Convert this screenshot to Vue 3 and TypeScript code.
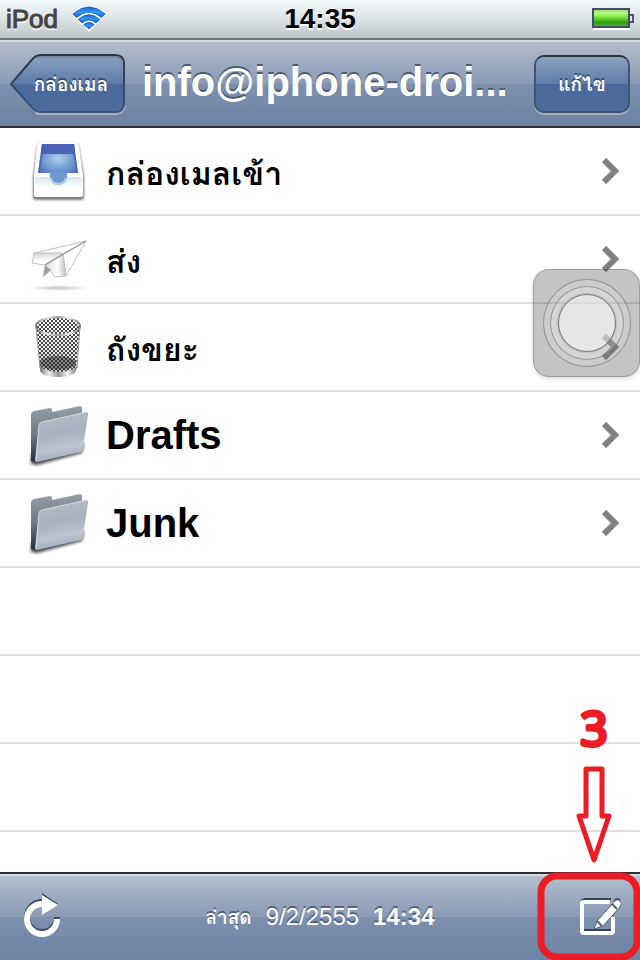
<script setup lang="ts">
interface Mailbox {
  name: string
  icon: 'inbox' | 'sent' | 'trash' | 'folder'
  latin: boolean
}

const mailboxes: Mailbox[] = [
  { name: 'กล่องเมลเข้า', icon: 'inbox', latin: false },
  { name: 'ส่ง', icon: 'sent', latin: false },
  { name: 'ถังขยะ', icon: 'trash', latin: false },
  { name: 'Drafts', icon: 'folder', latin: true },
  { name: 'Junk', icon: 'folder', latin: true },
]
const emptyRows = 3
</script>

<template>
  <div class="screen">
    <div class="status">
      <div class="carrier">
        <span>iPod</span>
        <svg class="wifi" width="34" height="26" viewBox="0 0 34 26" aria-hidden="true">
          <defs>
            <linearGradient id="wifiFill" x1="0" y1="0" x2="0" y2="1">
              <stop offset="0" stop-color="#1d62d8" />
              <stop offset="0.5" stop-color="#2d9cf5" />
              <stop offset="1" stop-color="#1455cf" />
            </linearGradient>
          </defs>
          <g fill="#fff" transform="translate(0 2)">
            <path d="M1 8Q17-6 33 8L29.500 11.500Q17 1 4.500 11.500Z" />
            <path d="M6.500 13.500Q17 4 27.500 13.500L24 17Q17 11 10 17Z" />
            <path d="M12 19Q17 15 22 19L17 24Z" />
          </g>
          <g fill="url(#wifiFill)" stroke="#1550c4" stroke-width="0.8">
            <path d="M1 8Q17-6 33 8L29.500 11.500Q17 1 4.500 11.500Z" />
            <path d="M6.500 13.500Q17 4 27.500 13.500L24 17Q17 11 10 17Z" />
            <path d="M12 18.500Q17 14.500 22 18.500L17 23Z" />
          </g>
        </svg>
      </div>
      <span class="clock">14:35</span>
      <svg class="battery" width="42" height="22" viewBox="0 0 42 22" aria-hidden="true">
        <defs>
          <linearGradient id="charge" x1="0" y1="0" x2="0" y2="1">
            <stop offset="0" stop-color="#8fd96a" />
            <stop offset="0.25" stop-color="#b4fa7e" />
            <stop offset="0.5" stop-color="#6fdc38" />
            <stop offset="0.75" stop-color="#2b9a0c" />
            <stop offset="1" stop-color="#5bc02c" />
          </linearGradient>
        </defs>
        <path d="M1 21H38" stroke="#fff" stroke-width="2" />
        <rect x="1" y="1" width="36" height="18" fill="url(#charge)" stroke="#454b66" stroke-width="2" />
        <path d="M38 7H41V14H38" fill="#e4e8ec" stroke="#50566c" stroke-width="2" />
      </svg>
    </div>

    <header class="nav">
      <button class="back" type="button">
        <svg class="back-shape" width="116" height="61" viewBox="0 0 118 61" preserveAspectRatio="none" aria-hidden="true">
          <defs>
            <linearGradient id="backFill" x1="0" y1="0" x2="0" y2="1">
              <stop offset="0" stop-color="#8ca2c0" />
              <stop offset="0.5" stop-color="#5c7ca9" />
              <stop offset="0.52" stop-color="#486a9b" />
              <stop offset="1" stop-color="#4c6d9c" />
            </linearGradient>
            <linearGradient id="backEdge" x1="0" y1="0" x2="0" y2="1">
              <stop offset="0" stop-color="#2c3442" />
              <stop offset="1" stop-color="#3c547c" />
            </linearGradient>
          </defs>
          <path d="M26 59Q29 60 33 60H107Q115 60 117 52" fill="none" stroke="#a5b3c8" stroke-width="2" />
          <path d="M1 30L22 6Q26 1 32 1H107Q116 1 116 10V49Q116 58 107 58H32Q26 58 22 53Z" fill="url(#backFill)" stroke="url(#backEdge)" stroke-width="2" />
          <path d="M27 4Q29 3 32 3H107Q112 3 114 6" fill="none" stroke="#64748e" stroke-width="2" opacity=".6" />
        </svg>
        <span class="back-label">กล่องเมล</span>
      </button>
      <h1 class="title">info@iphone-droi...</h1>
      <button class="edit" type="button">แก้ไข</button>
    </header>

    <main class="list">
      <ul class="rows">
        <li v-for="box in mailboxes" :key="box.name" class="row">
          <a class="row-link" href="#">
            <svg v-if="box.icon === 'inbox'" class="icon" width="64" height="64" viewBox="0 0 64 64" aria-hidden="true">
              <defs>
                <radialGradient id="trayFloor" cx="0.5" cy="0.5" r="0.6">
                  <stop offset="0" stop-color="#acd0e8" />
                  <stop offset="1" stop-color="#527bc5" />
                </radialGradient>
                <linearGradient id="trayFront" x1="0" y1="0" x2="0" y2="1">
                  <stop offset="0" stop-color="#d8e9f0" />
                  <stop offset="0.8" stop-color="#fff" />
                </linearGradient>
                <filter id="traySoft" x="-10%" y="-10%" width="120%" height="120%">
                  <feGaussianBlur stdDeviation="1" />
                </filter>
              </defs>
              <path d="M14 4H49Q52 4 53 8L58 38V58Q58 61 55 61H10Q7 61 7 58V38L11 8Q12 4 14 4Z" fill="#444" opacity=".7" filter="url(#traySoft)" />
              <path d="M14 3H49Q52 3 53 7L57 37V56Q57 58 54 58H10Q8 58 8 56V37L11 7Q12 3 14 3Z" fill="#fff" />
              <path d="M16 5H48L52 34H12Z" fill="url(#trayFloor)" />
              <path d="M16 5H48L49 15H15Z" fill="#4b62b5" />
              <path d="M16 5L12 34H14L17 15V5ZM47 5V15L50 34H52L48 5Z" fill="#405fb4" opacity=".7" />
              <path d="M9 38H24Q25 46 32 46Q40 46 41 38H56V52H9Z" fill="url(#trayFront)" />
              <path d="M24 33H41V38Q40 46 32 46Q25 46 24 38Z" fill="#6f98cf" />
              <path d="M25 39Q26 45 32 45Q39 45 40 39" fill="none" stroke="#b4d1e3" stroke-width="2" />
            </svg>

            <svg v-else-if="box.icon === 'sent'" class="icon" width="64" height="64" viewBox="0 0 64 64" aria-hidden="true">
              <defs>
                <linearGradient id="wing" x1="0" y1="0" x2="0.2" y2="1">
                  <stop offset="0" stop-color="#d0d0d0" />
                  <stop offset="0.7" stop-color="#fff" />
                </linearGradient>
                <linearGradient id="keel" x1="0" y1="0" x2="1" y2="0">
                  <stop offset="0" stop-color="#ddd" />
                  <stop offset="0.6" stop-color="#fff" />
                  <stop offset="1" stop-color="#bbb" />
                </linearGradient>
                <radialGradient id="planeShadow">
                  <stop offset="0" stop-color="#999" stop-opacity=".6" />
                  <stop offset="1" stop-color="#999" stop-opacity="0" />
                </radialGradient>
              </defs>
              <ellipse cx="32" cy="61" rx="30" ry="3" fill="url(#planeShadow)" />
              <g stroke="#c4c4c4" stroke-linejoin="round">
                <path d="M8 26L60 14L37 27Z" fill="#fff" />
                <path d="M8 26H37L18 38L6 36Z" fill="url(#wing)" />
                <path d="M60 14L37 27L40 49Z" fill="#fff" />
                <path d="M37 27L40 49L29 50L20 38Z" fill="url(#keel)" />
                <path d="M19 38L25 43L17 50Z" fill="#a0a0a0" />
              </g>
              <path d="M60 14L19 38" stroke="#888" />
            </svg>

            <svg v-else-if="box.icon === 'trash'" class="icon" width="64" height="64" viewBox="0 0 64 64" aria-hidden="true">
              <defs>
                <pattern id="mesh" width="4" height="4" patternUnits="userSpaceOnUse">
                  <path d="M0 0L4 4M4 0L0 4" stroke="#333" stroke-width="0.9" />
                </pattern>
                <linearGradient id="metal" x1="0" y1="0" x2="1" y2="0">
                  <stop offset="0" stop-color="#777" />
                  <stop offset="0.25" stop-color="#eee" />
                  <stop offset="0.5" stop-color="#96969c" />
                  <stop offset="0.75" stop-color="#f4f4f4" />
                  <stop offset="1" stop-color="#777" />
                </linearGradient>
                <linearGradient id="depth" x1="0" y1="0" x2="0" y2="1">
                  <stop offset="0" stop-color="#aaa" stop-opacity="0" />
                  <stop offset="1" stop-color="#555" stop-opacity=".3" />
                </linearGradient>
              </defs>
              <path d="M10 11Q10 2 32 2Q54 2 54 11L50 54Q47 60 32 60Q17 60 14 54Z" fill="url(#depth)" />
              <path d="M10 11Q10 2 32 2Q54 2 54 11L50 54Q47 60 32 60Q17 60 14 54Z" fill="url(#mesh)" />
              <ellipse cx="32" cy="48" rx="18" ry="7" fill="#222" opacity=".45" />
              <ellipse cx="32" cy="48" rx="18" ry="7" fill="url(#mesh)" />
              <path d="M14 51Q20 57 32 57Q45 57 51 51L50 56Q47 62 32 62Q17 62 14 56Z" fill="url(#metal)" />
              <ellipse cx="32" cy="11" rx="22" ry="9" fill="none" stroke="url(#metal)" stroke-width="2" />
              <path d="M10 12L14 53M54 12L51 53" stroke="#999" />
            </svg>

            <svg v-else class="icon" width="64" height="64" viewBox="0 0 64 64" aria-hidden="true">
              <defs>
                <linearGradient id="folderBack" x1="0" y1="0" x2="0" y2="1">
                  <stop offset="0" stop-color="#969da4" />
                  <stop offset="0.5" stop-color="#727a83" />
                  <stop offset="1" stop-color="#242d3c" />
                </linearGradient>
                <linearGradient id="folderFront" x1="0" y1="0" x2="0.2" y2="1">
                  <stop offset="0" stop-color="#b7bdca" />
                  <stop offset="0.5" stop-color="#a9b1c0" />
                  <stop offset="0.8" stop-color="#bcc3d1" />
                  <stop offset="1" stop-color="#a3acbd" />
                </linearGradient>
                <filter id="folderSoft" x="-10%" y="-10%" width="120%" height="130%">
                  <feGaussianBlur stdDeviation="1.500" />
                </filter>
              </defs>
              <path d="M5 52V61L11 62L56 50L58 40Z" fill="#111" opacity=".75" filter="url(#folderSoft)" />
              <path d="M5 12Q5 9 8 8L24 5Q26 5 26 7V9L54 3Q56 3 56 6V48L9 59L5 58Z" fill="url(#folderBack)" />
              <path d="M13 22Q13 20 16 19L60 9Q63 9 62 12L57 45Q57 48 55 49L11 59Q9 59 9 57Z" fill="url(#folderFront)" />
              <path d="M10 58L13 22Q13 20 16 19L61 9" fill="none" stroke="#d5d9e0" />
            </svg>

            <span class="name" :class="{ latin: box.latin }">{{ box.name }}</span>
            <svg class="chevron" width="18" height="26" viewBox="0 0 18 26" aria-hidden="true">
              <path d="M2 2L13 13L2 24" fill="none" stroke="#808080" stroke-width="6" />
            </svg>
          </a>
        </li>
        <li v-for="n in emptyRows" :key="n" class="row" aria-hidden="true"></li>
      </ul>
    </main>

    <footer class="toolbar">
      <button class="tool" type="button" aria-label="Refresh">
        <svg width="38" height="48" viewBox="0 0 38 48" aria-hidden="true">
          <g fill="none" stroke="#3d4a60">
            <path d="M33 24A15 15 0 1 1 18 9" stroke-width="6" />
            <path d="M18 0L34 11L18 22Z" fill="#3d4a60" stroke="none" />
          </g>
          <path d="M33 26A15 15 0 1 1 18 11" fill="none" stroke="#fff" stroke-width="6" />
          <path d="M18 2L34 12L18 22Z" fill="#fff" />
        </svg>
      </button>
      <p class="updated">
        <span class="updated-label">ล่าสุด</span>
        <span>9/2/2555</span>
        <b>14:34</b>
      </p>
      <button class="tool" type="button" aria-label="Compose">
        <svg width="44" height="40" viewBox="0 0 44 40" aria-hidden="true">
          <path d="M4 4Q5 2 7 2H33M6 33H33M33 19L37 15" fill="none" stroke="#35435a" stroke-width="2" />
          <path d="M32 5H6Q4 5 4 7V34Q4 36 6 36H33Q35 36 35 34V20" fill="none" stroke="#fff" stroke-width="4" />
          <path d="M6 33H33" stroke="#35435a" stroke-width="2" />
          <path d="M16 32L19 24L36 5Q39 1 42 4Q45 6 42 10L25 29Z" fill="#fff" stroke="#4f607b" stroke-width="1" />
          <path d="M34 7L39 12M19 24L24 29M36 4Q39 0 42 3" fill="none" stroke="#4f607b" stroke-width="2" />
        </svg>
      </button>
    </footer>

    <button class="assistive" type="button" aria-label="AssistiveTouch">
      <span class="ring outer"><span class="ring middle"><span class="ring inner"></span></span></span>
    </button>

    <svg class="callout" width="104" height="272" viewBox="0 0 104 272" aria-hidden="true">
      <text class="step" x="58" y="58" text-anchor="middle">3</text>
      <path d="M50 81H66V128H73L58 172L43 128H50Z" fill="none" stroke="#ed1c24" stroke-width="5" stroke-linejoin="round" />
      <rect x="5" y="188" width="96" height="81" rx="16" fill="none" stroke="#ed1c24" stroke-width="7" />
    </svg>
  </div>
</template>

<style>
body {
  margin: 0;
}
</style>

<style scoped>
.screen {
  position: relative;
  display: flex;
  flex-direction: column;
  min-height: 100vh;
  overflow: hidden;
  background: #fff;
  color: #000;
  font-family: "Liberation Sans", Loma, Waree, "Noto Sans Thai Looped", "Noto Sans", sans-serif;
}

button {
  margin: 0;
  padding: 0;
  border: 0;
  background: none;
  color: #fff;
  font-family: inherit;
}

svg {
  display: block;
}

.status {
  display: grid;
  grid-template-columns: 1fr auto 1fr;
  align-items: center;
  box-sizing: border-box;
  height: 40px;
  padding: 0 6px;
  border-bottom: 2px solid #6c7678;
  background: linear-gradient(#f4fafc, #dce3e5 50%, #bdc4c6);
  text-shadow: 0 2px 0 #fff;
}

.carrier {
  display: flex;
  align-items: center;
  gap: 14px;
  color: #444;
  font-size: 26px;
  -webkit-text-stroke: 1px #444;
}

.clock {
  font-size: 28px;
  font-weight: bold;
}

.battery {
  justify-self: end;
}

.nav {
  display: flex;
  align-items: center;
  gap: 16px;
  box-sizing: border-box;
  height: 88px;
  padding: 0 10px;
  border-top: 2px solid #d5dce4;
  border-bottom: 2px solid #2d3034;
  background: linear-gradient(#b2becd, #8a9ab5 50%, #7d90ae 50%, #6d83a5);
}

.back {
  display: grid;
  flex: none;
  align-items: center;
}

.back-shape,
.back-label {
  grid-area: 1 / 1;
}

.back-label {
  padding-left: 6px;
}

.back-label,
.edit {
  font-size: 19px;
  font-weight: bold;
  text-shadow: 0 -2px 0 #37496a;
}

.title {
  flex: 1;
  min-width: 0;
  margin: 0;
  overflow: hidden;
  color: #fff;
  font-size: 40px;
  line-height: 56px;
  padding-bottom: 4px;
  white-space: nowrap;
  text-shadow: 0 -2px 0 #4b5a72;
}

.edit {
  flex: none;
  box-sizing: border-box;
  width: 96px;
  height: 58px;
  border: 2px solid #40536f;
  border-top-color: #2c3442;
  border-radius: 10px;
  background: linear-gradient(#8ca2c0, #5c7ca9 50%, #486a9b 50%, #4c6d9c);
  box-shadow: 0 2px 0 #a0afc4;
}

.list {
  flex: 1;
}

.rows {
  margin: 0;
  padding: 0;
  list-style: none;
}

.row {
  box-sizing: border-box;
  height: 88px;
  border-bottom: 2px solid #e0e0e0;
}

.row-link {
  display: flex;
  align-items: center;
  height: 100%;
  padding: 0 20px 0 26px;
  color: inherit;
  text-decoration: none;
}

.icon {
  flex: none;
}

.name {
  flex: 1;
  padding: 4px 0 0 16px;
  font-size: 32px;
  font-weight: bold;
}

.latin {
  padding-top: 0;
  font-size: 40px;
}

.toolbar {
  display: flex;
  align-items: center;
  justify-content: space-between;
  box-sizing: border-box;
  height: 88px;
  padding: 0 18px 0 24px;
  border-top: 2px solid #2d3034;
  background: linear-gradient(#d5dce4 2px, #b2becd 2px, #8a9ab5 50%, #7d90ae 50%, #6d83a5);
}

.updated {
  display: flex;
  align-items: center;
  gap: 14px;
  margin: 0;
  color: #fff;
  font-size: 24px;
  text-shadow: 0 -2px 0 #4f607b;
}

.updated-label {
  font-size: 19px;
  font-weight: bold;
}

.assistive {
  position: absolute;
  top: 269px;
  right: 0;
  display: grid;
  place-items: center;
  box-sizing: border-box;
  width: 107px;
  height: 108px;
  border: 1px solid rgba(90, 90, 90, 0.35);
  border-radius: 16px;
  background: rgba(0, 0, 0, 0.23);
  box-shadow: 0 2px 4px rgba(0, 0, 0, 0.15);
}

.ring {
  display: grid;
  place-items: center;
  box-sizing: border-box;
  border: 1px solid rgba(90, 90, 90, 0.5);
  border-radius: 50%;
  background: rgba(255, 255, 255, 0.16);
}

.outer {
  width: 88px;
  height: 88px;
}

.middle {
  width: 74px;
  height: 74px;
}

.inner {
  width: 58px;
  height: 58px;
  border: 1px solid #777;
  background: rgba(255, 255, 255, 0.4);
  box-shadow: 0 0 2px #777;
}

.callout {
  position: absolute;
  right: 0;
  bottom: 0;
  pointer-events: none;
}

.step {
  fill: #ed1c24;
  stroke: #ed1c24;
  stroke-width: 4px;
  stroke-linejoin: round;
  font-family: "Noto Sans", sans-serif;
  font-size: 48px;
}
</style>
